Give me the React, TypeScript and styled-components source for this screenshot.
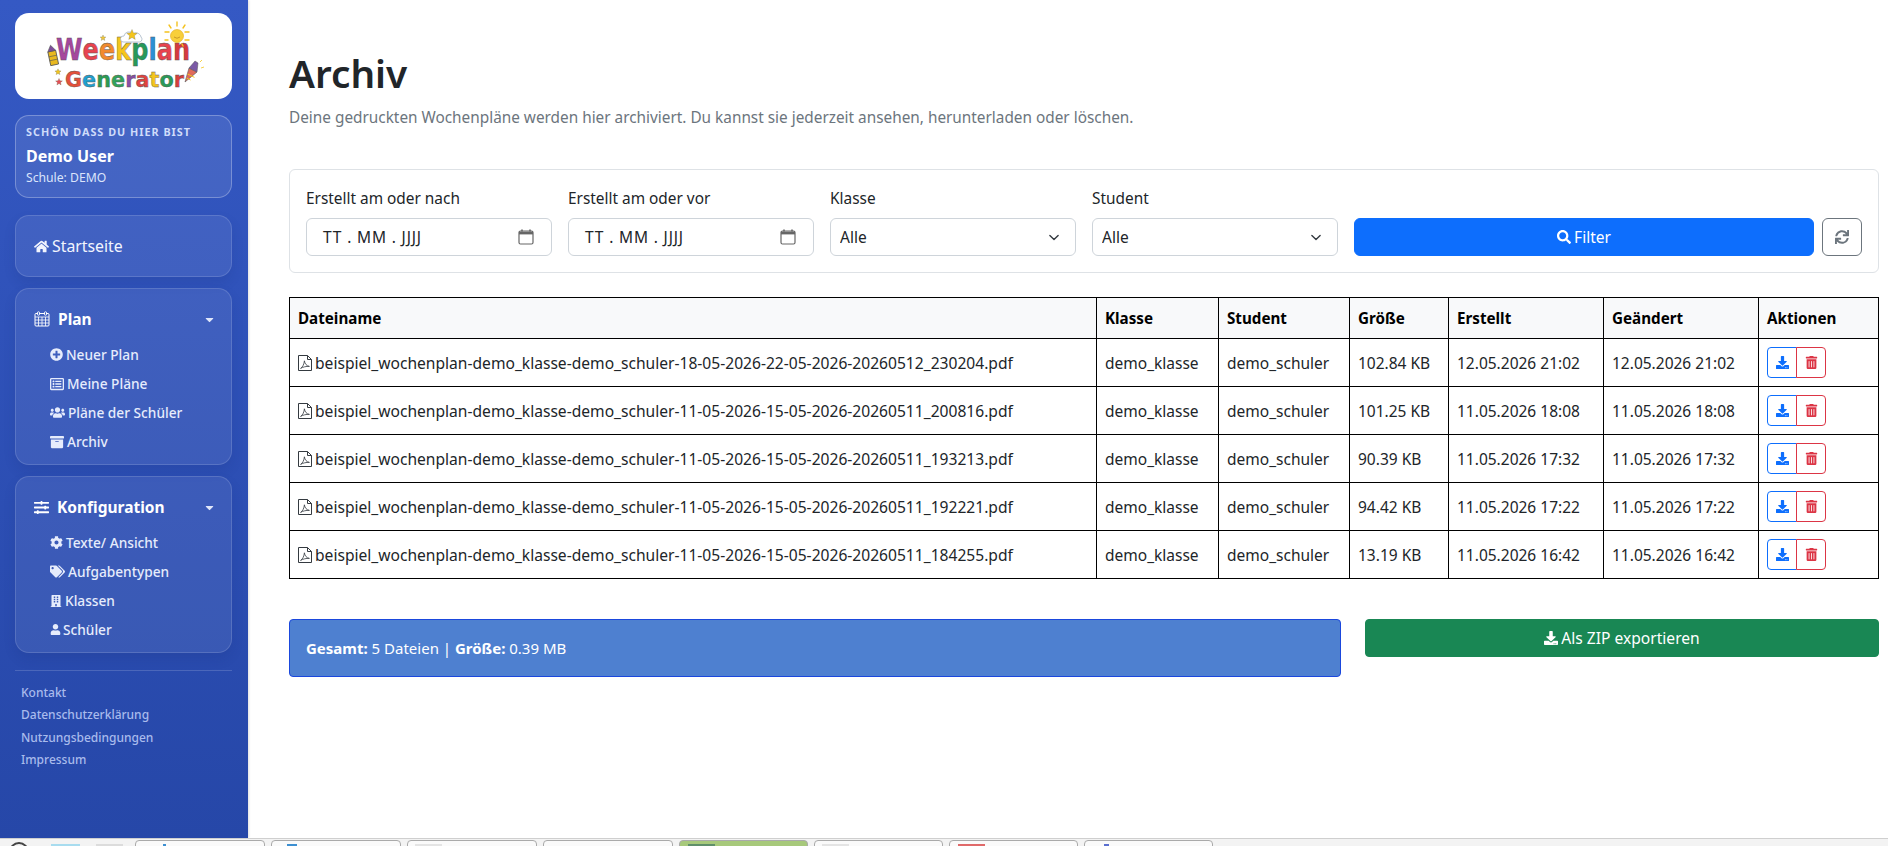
import React from "react";
import styled, { createGlobalStyle } from "styled-components";
import {
  FaHome, FaPlusCircle, FaRegListAlt, FaUsers, FaArchive, FaSlidersH, FaCog, FaTags, FaBuilding, FaUser,
  FaSearch, FaSync, FaDownload, FaTrashAlt, FaCaretDown,
} from "react-icons/fa";

const FONT = `"Noto Sans", "Open Sans", sans-serif`;

const Global = createGlobalStyle`
  * { box-sizing: border-box; }
  html, body { margin: 0; padding: 0; height: 100%; background: #fff; overflow: hidden; }
  body { font-family: ${FONT}; font-size: 16px; line-height: 24px; color: #212529; }
  #root { height: 100%; }
`;

const Page = styled.div`
  height: 846px; display: flex; flex-direction: column; overflow: hidden;
`;
const Shell = styled.div`
  flex: 1; min-height: 0; display: flex;
`;
const Sidebar = styled.aside`
  width: 248px; flex: none; padding: 13px 16px 0 15px; color: #fff;
  background: linear-gradient(180deg, #3559c4 0%, #2647a8 100%);
  box-shadow: 1px 0 2px rgba(0, 0, 0, .12);
`;
const LogoCard = styled.div`
  height: 86px; border-radius: 14px; background: #fff; overflow: hidden; margin-bottom: 16px;
  svg { display: block; width: 100%; height: 100%; }
`;
const WelcomeCard = styled.div`
  height: 83px; padding: 8px 10px; border-radius: 14px; margin-bottom: 17px;
  background: rgba(255, 255, 255, .09); border: 1px solid rgba(255, 255, 255, .28);
`;
const Eyebrow = styled.div`
  font-size: 10.8px; line-height: 16px; font-weight: 700; letter-spacing: 1px; color: #cfdcfa;
`;
const UserName = styled.div`
  font-size: 16px; line-height: 24px; font-weight: 700; margin-top: 4px;
`;
const School = styled.div`
  font-size: 12.2px; line-height: 16px; margin-top: 2px; color: #dbe4fb;
`;
const NavCard = styled.div`
  border-radius: 14px; margin-bottom: 11px; padding: 18px 18px 8px;
  background: rgba(255, 255, 255, .08); border: 1px solid rgba(255, 255, 255, .14);
  box-shadow: 0 6px 12px rgba(20, 40, 110, .14);
`;
const HomeCard = styled(NavCard)`
  height: 62px; padding: 0 18px; display: flex; align-items: center; gap: 3px;
  font-size: 15.8px; color: #f2f5fe;
  svg { width: 15px; height: 15px; }
`;
const GroupTitle = styled.div<{ $gap: number }>`
  display: flex; align-items: center; height: 24px; font-size: 15.5px; font-weight: 700; gap: ${p => p.$gap}px;
  svg { flex: none; }
`;
const Caret = styled.span`
  margin-left: auto; display: flex; margin-right: -3px; color: #dfe6fa;
`;
const SubList = styled.div`
  margin: 9px 0 0 16px; display: flex; flex-direction: column;
`;
const SubItem = styled.div<{ $gap?: number }>`
  height: 29px; display: flex; align-items: center; gap: ${p => p.$gap ?? 3}px; font-size: 13.7px; font-weight: 500; color: #e6ecfc;
  svg { flex: none; }
`;
const Divider = styled.div`
  height: 1px; background: rgba(255, 255, 255, .16); margin-top: 17px;
`;
const FooterLinks = styled.div`
  margin: 11px 0 0 6px; display: flex; flex-direction: column;
`;
const FooterLink = styled.div`
  height: 22.4px; line-height: 22.4px; font-size: 12px; font-weight: 500; color: #a9bbec;
`;

const Main = styled.main`
  flex: 1; min-width: 0; padding: 49px 9px 0 41px;
`;
const Title = styled.h1`
  margin: 0; font-size: 38.7px; line-height: 48px; font-weight: 600; color: #212529;
`;
const Lead = styled.p`
  margin: 8px 0 0; font-size: 15.35px; line-height: 24px; color: #6c757d;
`;
const FilterBox = styled.form`
  margin-top: 40px; padding: 16px; border: 1px solid #dee2e6; border-radius: 6px; background: #fff;
  display: grid; grid-template-columns: repeat(4, 246px) 1fr; column-gap: 16px; align-items: end;
`;
const Field = styled.label`
  display: flex; flex-direction: column; font-size: 15.4px;
`;
const FieldLabel = styled.span`
  height: 24px; line-height: 26px; margin-bottom: 8px;
`;
const DateBox = styled.div`
  height: 38px; border: 1px solid #ced4da; border-radius: 6px; padding: 0 17px 0 16px; font-size: 15.5px;
  display: flex; align-items: center; justify-content: space-between; color: #212529; background: #fff;
`;
const DateMask = styled.span`
  letter-spacing: .85px;
`;
const Select = styled.select`
  height: 38px; width: 100%; border: 1px solid #ced4da; border-radius: 6px; padding: 0 30px 0 9px;
  appearance: none; font: inherit; font-size: 15.5px; color: #212529; background-color: #fff;
  background-image: url("data:image/svg+xml,%3csvg xmlns='http://www.w3.org/2000/svg' viewBox='0 0 16 16'%3e%3cpath fill='none' stroke='%23343a40' stroke-linecap='round' stroke-linejoin='round' stroke-width='2' d='m2 5 6 6 6-6'/%3e%3c/svg%3e");
  background-repeat: no-repeat; background-position: right 14px center; background-size: 14px 11px;
`;
const Actions = styled.div`
  display: flex; gap: 8px;
`;
const PrimaryButton = styled.button`
  flex: 1; height: 38px; border: 1px solid #0d6efd; border-radius: 6px; background: #0d6efd; color: #fff;
  font: inherit; font-size: 15.5px; display: flex; align-items: center; justify-content: center; gap: 3px;
  svg { width: 14px; height: 14px; }
`;
const ResetButton = styled.button`
  width: 40px; height: 38px; border: 1px solid #6c757d; border-radius: 6px; background: #fff; color: #6c757d;
  display: flex; align-items: center; justify-content: center; padding: 0;
  svg { width: 14px; height: 14px; }
`;
const Table = styled.table`
  margin-top: 24px; width: 100%; table-layout: fixed; border-collapse: collapse; font-size: 15.5px;
  th, td { border: 1px solid #000; padding: 0 8px; text-align: left; white-space: nowrap; overflow: hidden; }
  th { height: 41px; background: #f8f9fa; font-size: 15.2px; font-weight: 700; color: #000; }
  td { height: 48px; color: #212529; }
`;
const FileName = styled.span`
  display: flex; align-items: center; gap: 3px; font-size: 15.6px;
  svg { flex: none; }
`;
const ButtonGroup = styled.div`
  display: flex; width: 59px; height: 31px;
`;
const IconButton = styled.button<{ $color: string; $side: "l" | "r" }>`
  height: 31px; width: 30px; padding: 0; background: #fff; color: ${p => p.$color}; font-size: 13px;
  display: flex; align-items: center; justify-content: center;
  border: 1px solid ${p => p.$color};
  border-radius: ${p => (p.$side === "l" ? "4px 0 0 4px" : "0 4px 4px 0")};
  margin-left: ${p => (p.$side === "r" ? -1 : 0)}px;
  svg { width: 13px; height: 13px; }
`;
const Summary = styled.div`
  margin-top: 40px; display: grid; grid-template-columns: 1052px 514px; justify-content: space-between; align-items: start;
`;
const SummaryAlert = styled.div`
  height: 58px; padding: 16px 16px; background: #4e80d0; border: 1px solid #1a47dd; border-radius: 4px;
  color: #fff; font-size: 15px; line-height: 24px;
`;
const ExportButton = styled.button`
  height: 38px; border: 1px solid #198754; border-radius: 4px; background: #198754; color: #fff;
  font: inherit; font-size: 15.6px; display: flex; align-items: center; justify-content: center; gap: 3px;
  svg { width: 14px; height: 14px; }
`;

const Strip = styled.div`
  height: 8px; flex: none; overflow: hidden; background: #f3f3f3; border-top: 1px solid #cfcfcf;
  display: flex; align-items: flex-start; padding-top: 1px;
`;
const StripCircle = styled.span`
  width: 20px; height: 20px; margin: 2px 0 0 9px; border-radius: 50%; border: 2px solid #444; flex: none;
`;
const StripBlock = styled.span<{ $w: number; $ml: number; $c: string }>`
  width: ${p => p.$w}px; margin-left: ${p => p.$ml}px; height: 12px; margin-top: 4px; background: ${p => p.$c}; flex: none;
`;
const StripSpacer = styled.span`
  width: 12px; flex: none;
`;
const Tab = styled.div<{ $w: number; $bg?: string }>`
  width: ${p => p.$w}px; height: 20px; flex: none; margin-right: 6px; padding-top: 3px;
  border: 1px solid #aaa; border-radius: 4px 4px 0 0; background: ${p => p.$bg || "#fafafa"};
`;
const TabIcon = styled.span<{ $w: number; $ml: number; $c: string }>`
  display: block; height: 10px; width: ${p => p.$w}px; margin-left: ${p => p.$ml}px; background: ${p => p.$c};
`;

const CalendarFa = () => (
  <svg width="16" height="16" viewBox="0 0 16 16" fill="none" stroke="#fff" strokeWidth="1">
    <rect x="1" y="2.5" width="14" height="12.5" rx="1" />
    <path d="M1 6h14M1 9h14M1 12h14M4.5 6v9M8 6v9M11.5 6v9" strokeWidth=".8" />
    <rect x="3.5" y=".8" width="2" height="3.4" rx=".8" fill="#3f61c4" />
    <rect x="10.5" y=".8" width="2" height="3.4" rx=".8" fill="#3f61c4" />
  </svg>
);

const DateIcon = () => (
  <svg width="16" height="16" viewBox="0 0 16 16" fill="none">
    <path d="M4 .5v2M12 .5v2" stroke="#666" strokeWidth="1.6" />
    <rect x="1" y="2" width="14" height="13" rx="1.5" stroke="#666" strokeWidth="1.2" />
    <path d="M1 2.6h14v2.8H1z" fill="#666" />
  </svg>
);

const PdfIcon = () => (
  <svg width="14" height="16" viewBox="0 0 14 16" fill="none" stroke="#343a40" strokeWidth="1">
    <path d="M.5.5h9l4 4v11H.5z" strokeLinejoin="round" />
    <path d="M9.5.5v4h4" />
    <path d="M2.6 13.4c2-1 3.6-4.6 3.8-7.6.4 3 2.2 5.2 5 5.6-3.2-.2-6.6.6-8.8 2z" strokeWidth=".8" strokeLinejoin="round" />
  </svg>
);

const letters = (word: string, colors: string[]) =>
  word.split("").map((c, i) => (
    <tspan key={i} fill={colors[i]}>{c}</tspan>
  ));

const Star = ({ x, y, r, c }: { x: number; y: number; r: number; c: string }) => {
  const pts: string[] = [];
  for (let i = 0; i < 10; i++) {
    const a = -Math.PI / 2 + (i * Math.PI) / 5;
    const q = i % 2 ? r * 0.45 : r;
    pts.push(`${(x + q * Math.cos(a)).toFixed(2)},${(y + q * Math.sin(a)).toFixed(2)}`);
  }
  return <polygon points={pts.join(" ")} fill={c} stroke="#6b6b4a" strokeWidth=".3" />;
};

const Logo = () => (
  <svg viewBox="0 0 217 86" role="img" aria-label="Weekplan Generator">
    <g fontFamily='"DejaVu Sans", sans-serif' fontWeight="700" stroke="#555" strokeWidth=".35">
      <g transform="translate(41 47) scale(.86 1.06)">
        <text x="0" y="0" fontSize="28">
          {letters("Weekplan", ["#a5479d", "#e8434e", "#f28a2e", "#f6c51c", "#27995a", "#2c8fd6", "#e8434e", "#d6393f"])}
        </text>
      </g>
      <g transform="translate(50 74) scale(.946 1)">
        <text x="0" y="0" fontSize="22">
          {letters("Generator", ["#e5503a", "#20a0cf", "#2b9c54", "#32a35a", "#8a4ea6", "#e2433f", "#f4c51d", "#2c9a58", "#d9403d"])}
        </text>
      </g>
    </g>
    <g stroke="#f4c21f" strokeWidth="1.4" strokeLinecap="round">
      <path d="M162 9v4M170 12l-2 3M154 12l2 3M174 19h-4M150 19h4M174 27h-4M150 27h3M168 33l-1-2" />
    </g>
    <circle cx="162" cy="23" r="6.5" fill="#f8cf3a" stroke="#e0a818" strokeWidth=".6" />
    <path d="M159 24q3 2.5 6 0" stroke="#a8751a" strokeWidth=".6" fill="none" />
    <path d="M108 29a3 3 0 0 1 1-6a5 5 0 0 1 9-2a5 5 0 0 1 8 3a3 3 0 0 1-1 5z" fill="#fff" stroke="#9ab" strokeWidth=".7" />
    <Star x={117} y={22} r={5.5} c="#f4c51d" />
    <Star x={88} y={25} r={3} c="#f0c63a" />
    <Star x={43} y={59} r={3.2} c="#f4c51d" />
    <Star x={44} y={69} r={3.6} c="#e34d55" />
    <g transform="rotate(-12 38 44)">
      <rect x="34" y="38" width="8" height="14" fill="#e9b91f" stroke="#555" strokeWidth=".8" />
      <path d="M34 38l4-6 4 6z" fill="#7d4c9c" stroke="#555" strokeWidth=".6" />
      <path d="M34 43h8M34 47h8" stroke="#555" strokeWidth=".6" />
    </g>
    <path d="M170 69l4-14 8 4z" fill="#e06a5c" stroke="#555" strokeWidth=".6" />
    <path d="M174 55l6-7 3 2-1 9z" fill="#7b5aa6" stroke="#555" strokeWidth=".5" />
    <path d="M172.5 61l7 3.4M171.5 65l4 2" stroke="#f4c51d" strokeWidth="1" />
    <path d="M186 55l3-1M185 49l2-2" stroke="#f4c51d" strokeWidth=".8" />
  </svg>
);

const files = [
  ["beispiel_wochenplan-demo_klasse-demo_schuler-18-05-2026-22-05-2026-20260512_230204.pdf", "102.84 KB", "12.05.2026 21:02"],
  ["beispiel_wochenplan-demo_klasse-demo_schuler-11-05-2026-15-05-2026-20260511_200816.pdf", "101.25 KB", "11.05.2026 18:08"],
  ["beispiel_wochenplan-demo_klasse-demo_schuler-11-05-2026-15-05-2026-20260511_193213.pdf", "90.39 KB", "11.05.2026 17:32"],
  ["beispiel_wochenplan-demo_klasse-demo_schuler-11-05-2026-15-05-2026-20260511_192221.pdf", "94.42 KB", "11.05.2026 17:22"],
  ["beispiel_wochenplan-demo_klasse-demo_schuler-11-05-2026-15-05-2026-20260511_184255.pdf", "13.19 KB", "11.05.2026 16:42"],
];

const tabs: { w: number; bg?: string; ml: number; iw: number; c: string }[] = [
  { w: 130, ml: 27, iw: 3, c: "#3d8fd1" },
  { w: 130, ml: 15, iw: 10, c: "#3d8fd1" },
  { w: 130, ml: 7, iw: 27, c: "#e4e4e4" },
  { w: 130, ml: 0, iw: 0, c: "transparent" },
  { w: 129, bg: "#a7c97b", ml: 8, iw: 27, c: "#5f8f6a" },
  { w: 129, ml: 7, iw: 27, c: "#e4e4e4" },
  { w: 129, ml: 8, iw: 27, c: "#e06a6a" },
  { w: 129, ml: 19, iw: 5, c: "#5a6fd0" },
];

export default function App() {
  return (
    <>
      <Global />
      <Page>
        <Shell>
          <Sidebar>
            <LogoCard><Logo /></LogoCard>
            <WelcomeCard>
              <Eyebrow>SCHÖN DASS DU HIER BIST</Eyebrow>
              <UserName>Demo User</UserName>
              <School>Schule: DEMO</School>
            </WelcomeCard>
            <HomeCard><FaHome /> Startseite</HomeCard>
            <NavCard>
              <GroupTitle $gap={8}><CalendarFa /> Plan <Caret><FaCaretDown size={13} /></Caret></GroupTitle>
              <SubList>
                <SubItem><FaPlusCircle size={13} /> Neuer Plan</SubItem>
                <SubItem><FaRegListAlt size={14} /> Meine Pläne</SubItem>
                <SubItem><FaUsers size={15} /> Pläne der Schüler</SubItem>
                <SubItem><FaArchive size={14} /> Archiv</SubItem>
              </SubList>
            </NavCard>
            <NavCard>
              <GroupTitle $gap={8}><FaSlidersH size={15} /> Konfiguration <Caret><FaCaretDown size={13} /></Caret></GroupTitle>
              <SubList>
                <SubItem><FaCog size={13} /> Texte/ Ansicht</SubItem>
                <SubItem><FaTags size={15} /> Aufgabentypen</SubItem>
                <SubItem><FaBuilding size={12} /> Klassen</SubItem>
                <SubItem $gap={2}><FaUser size={11} /> Schüler</SubItem>
              </SubList>
            </NavCard>
            <Divider />
            <FooterLinks>
              <FooterLink>Kontakt</FooterLink>
              <FooterLink>Datenschutzerklärung</FooterLink>
              <FooterLink>Nutzungsbedingungen</FooterLink>
              <FooterLink>Impressum</FooterLink>
            </FooterLinks>
          </Sidebar>
          <Main>
            <Title>Archiv</Title>
            <Lead>Deine gedruckten Wochenpläne werden hier archiviert. Du kannst sie jederzeit ansehen, herunterladen oder löschen.</Lead>
            <FilterBox>
              <Field><FieldLabel>Erstellt am oder nach</FieldLabel><DateBox><DateMask>TT . MM . JJJJ</DateMask><DateIcon /></DateBox></Field>
              <Field><FieldLabel>Erstellt am oder vor</FieldLabel><DateBox><DateMask>TT . MM . JJJJ</DateMask><DateIcon /></DateBox></Field>
              <Field><FieldLabel>Klasse</FieldLabel><Select defaultValue="Alle"><option>Alle</option></Select></Field>
              <Field><FieldLabel>Student</FieldLabel><Select defaultValue="Alle"><option>Alle</option></Select></Field>
              <Actions>
                <PrimaryButton type="button"><FaSearch /> Filter</PrimaryButton>
                <ResetButton type="button" aria-label="Zurücksetzen"><FaSync /></ResetButton>
              </Actions>
            </FilterBox>
            <Table>
              <colgroup>
                <col style={{ width: 807 }} />
                <col style={{ width: 122 }} />
                <col style={{ width: 131 }} />
                <col style={{ width: 99 }} />
                <col style={{ width: 155 }} />
                <col style={{ width: 155 }} />
                <col />
              </colgroup>
              <thead>
                <tr>
                  <th>Dateiname</th><th>Klasse</th><th>Student</th><th>Größe</th><th>Erstellt</th><th>Geändert</th><th>Aktionen</th>
                </tr>
              </thead>
              <tbody>
                {files.map(([name, size, date]) => (
                  <tr key={name}>
                    <td><FileName><PdfIcon />{name}</FileName></td>
                    <td>demo_klasse</td>
                    <td>demo_schuler</td>
                    <td>{size}</td>
                    <td>{date}</td>
                    <td>{date}</td>
                    <td>
                      <ButtonGroup>
                        <IconButton type="button" $color="#0d6efd" $side="l" aria-label="Herunterladen"><FaDownload /></IconButton>
                        <IconButton type="button" $color="#dc3545" $side="r" aria-label="Löschen"><FaTrashAlt /></IconButton>
                      </ButtonGroup>
                    </td>
                  </tr>
                ))}
              </tbody>
            </Table>
            <Summary>
              <SummaryAlert><strong>Gesamt:</strong> 5 Dateien | <strong>Größe:</strong> 0.39 MB</SummaryAlert>
              <ExportButton type="button"><FaDownload /> Als ZIP exportieren</ExportButton>
            </Summary>
          </Main>
        </Shell>
        <Strip>
          <StripCircle />
          <StripBlock $w={29} $ml={22} $c="#a8dcef" />
          <StripBlock $w={27} $ml={16} $c="#dcdcdc" />
          <StripSpacer />
          {tabs.map((t, i) => (
            <Tab key={i} $w={t.w} $bg={t.bg}>
              <TabIcon $w={t.iw} $ml={t.ml} $c={t.c} />
            </Tab>
          ))}
        </Strip>
      </Page>
    </>
  );
}
